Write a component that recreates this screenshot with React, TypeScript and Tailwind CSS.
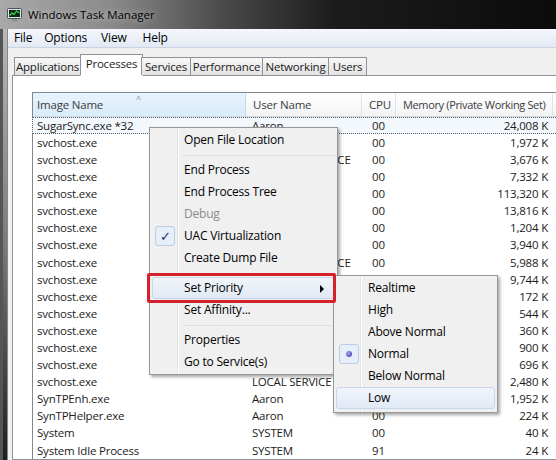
import { ReactNode } from "react";

type Row = { name: string; user: string; cpu: string; mem: string };

// cells hidden behind the context menus are left empty
const rows: Row[] = [
  { name: "SugarSync.exe *32", user: "Aaron", cpu: "00", mem: "24,008 K" },
  { name: "svchost.exe", user: "", cpu: "00", mem: "1,972 K" },
  { name: "svchost.exe", user: "NETWORK SERVICE", cpu: "00", mem: "3,676 K" },
  { name: "svchost.exe", user: "", cpu: "00", mem: "7,332 K" },
  { name: "svchost.exe", user: "", cpu: "00", mem: "113,320 K" },
  { name: "svchost.exe", user: "", cpu: "00", mem: "13,816 K" },
  { name: "svchost.exe", user: "", cpu: "00", mem: "1,204 K" },
  { name: "svchost.exe", user: "", cpu: "00", mem: "3,940 K" },
  { name: "svchost.exe", user: "NETWORK SERVICE", cpu: "00", mem: "5,988 K" },
  { name: "svchost.exe", user: "", cpu: "", mem: "9,744 K" },
  { name: "svchost.exe", user: "", cpu: "", mem: "172 K" },
  { name: "svchost.exe", user: "", cpu: "", mem: "544 K" },
  { name: "svchost.exe", user: "", cpu: "", mem: "360 K" },
  { name: "svchost.exe", user: "", cpu: "", mem: "900 K" },
  { name: "svchost.exe", user: "", cpu: "", mem: "696 K" },
  { name: "svchost.exe", user: "LOCAL SERVICE", cpu: "", mem: "2,480 K" },
  { name: "SynTPEnh.exe", user: "Aaron", cpu: "", mem: "1,952 K" },
  { name: "SynTPHelper.exe", user: "Aaron", cpu: "00", mem: "224 K" },
  { name: "System", user: "SYSTEM", cpu: "00", mem: "40 K" },
  { name: "System Idle Process", user: "SYSTEM", cpu: "91", mem: "24 K" },
];

const tabs = [
  { label: "Applications", w: "w-[67px]" },
  { label: "Processes", w: "w-[63px]", active: true },
  { label: "Services", w: "w-[50px]" },
  { label: "Performance", w: "w-[73px]" },
  { label: "Networking", w: "w-[67px]" },
  { label: "Users", w: "w-[39px]" },
];

const TaskIcon = () => (
  <svg width="15" height="14" viewBox="0 0 15 14">
    <rect x="0.5" y="0.5" width="14" height="10" rx="1" fill="#dfe6ea" stroke="#4a5258" />
    <rect x="2" y="2" width="11" height="7" fill="#0f2a14" />
    <polyline points="2.5,7.5 5,5 7,6.5 9.5,3 12.5,5" fill="none" stroke="#3fe05a" strokeWidth="1.2" />
    <rect x="5" y="11" width="5" height="2.5" fill="#8a9399" />
  </svg>
);

const MenuItem = ({
  children,
  disabled,
  hot,
  mark,
  arrow,
  gutter = "pl-[31px]",
}: {
  children: ReactNode;
  disabled?: boolean;
  hot?: boolean;
  mark?: ReactNode;
  arrow?: boolean;
  gutter?: string;
}) => (
  <div
    className={`relative h-[22px] mx-[2px] flex items-center ${gutter} rounded-[3px] border ${
      hot
        ? "border-[#c7d7ea] bg-[linear-gradient(180deg,#f1f5fb,#e1e9f4)]"
        : "border-transparent"
    } ${disabled ? "text-[#8d8d8d]" : "text-black"}`}
  >
    {mark && (
      <div className="absolute left-[2px] top-0 w-[20px] h-[20px] rounded-[3px] border border-[#b9cde6] bg-[#e6eefa] flex items-center justify-center">
        {mark}
      </div>
    )}
    <span>{children}</span>
    {arrow && (
      <span className="absolute right-[10px] top-[7px] w-0 h-0 border-y-[4px] border-y-transparent border-l-[4px] border-l-black" />
    )}
  </div>
);

const Separator = () => (
  <div className="h-[8px] flex items-center">
    <div className="ml-[32px] mr-[2px] flex-1 border-t border-[#e0e0e0]" />
  </div>
);

export default function App() {
  return (
    <div className="relative w-[556px] h-[460px] overflow-hidden bg-[#f0f0f0] font-['Open_Sans',sans-serif] text-[11.5px] tracking-[-0.2px] leading-none text-[#1b1b1b]">
      {/* title bar */}
      <div className="h-[29px] flex items-center gap-[6px] pl-[7px] bg-[linear-gradient(90deg,#a9a9a9_0%,#8a8a8a_20%,#4a4a4a_40%,#1c1c1c_60%,#0b0b0b_100%)]">
        <TaskIcon />
        <span className="text-[11.5px] tracking-[0px] text-black [text-shadow:0_0_6px_rgba(255,255,255,0.6)]">
          Windows Task Manager
        </span>
      </div>

      <div className="flex h-[431px]">
        {/* left window frame */}
        <div className="w-[8px] bg-[linear-gradient(180deg,#b8b8b8,#7a7a7a_50%,#1e1e1e)] border-l-[3px] border-l-[#555] border-r border-r-[#888]" />

        <div className="flex-1 flex flex-col min-w-0">
          {/* menu bar */}
          <div className="h-[19px] flex items-center pl-[6px] bg-[linear-gradient(180deg,#f4f7fc,#e3e9f4)] border-b border-[#c9d3e2] text-black text-[12px]">
            <span>File</span>
            <span className="ml-[12px]">Options</span>
            <span className="ml-[14px]">View</span>
            <span className="ml-[16px]">Help</span>
          </div>

          {/* tabs */}
          <div className="flex items-end pl-[6px] pt-[6px] relative z-10">
            {tabs.map((t) => (
              <div
                key={t.label}
                className={`${t.w} flex items-center justify-center border border-[#8e9199] ${
                  t.active
                    ? "h-[22px] -mb-px bg-white border-b-white -mx-[1px] pb-[2px]"
                    : "h-[18px] bg-[linear-gradient(180deg,#f7f7f7,#e3e3e3)] border-b-0 -ml-px first:ml-0"
                }`}
              >
                {t.label}
              </div>
            ))}
          </div>

          {/* panel */}
          <div className="flex-1 ml-[4px] -mr-[10px] border border-[#8e9199] bg-white pl-[19px] pt-[16px]">
            <div className="border-l border-t border-[#828790] h-full">
              {/* header */}
              <div className="grid grid-cols-[213px_116px_34px_157px_1fr] h-[24px] border-b border-[#d5d5d5] text-[#3c3c3c]">
                <div className="relative flex items-center pl-[4px] bg-[linear-gradient(180deg,#e8f4fc,#d9ecf9)] border-r border-[#c6d6e4]">
                  Image Name
                  <span className="absolute left-[103px] top-[1px] text-[9px] text-[#7a8a99]">^</span>
                </div>
                <div className="flex items-center pl-[7px] bg-[linear-gradient(180deg,#ffffff,#f3f4f6)] border-r border-[#e2e3e5]">
                  User Name
                </div>
                <div className="flex items-center pl-[7px] bg-[linear-gradient(180deg,#ffffff,#f3f4f6)] border-r border-[#e2e3e5]">
                  CPU
                </div>
                <div className="flex items-center pl-[7px] whitespace-nowrap text-[11px] tracking-[-0.35px] bg-[linear-gradient(180deg,#ffffff,#f3f4f6)] border-r border-[#e2e3e5]">
                  Memory (Private Working Set)
                </div>
                <div className="bg-[linear-gradient(180deg,#ffffff,#f3f4f6)]" />
              </div>

              {/* rows */}
              {rows.map((r, i) => (
                <div
                  key={i}
                  className={`grid grid-cols-[213px_116px_34px_157px_1fr] h-[17.1px] items-center ${
                    i === 0 ? "border border-dotted border-[#4f5e73] bg-[#f3f8fd] -mx-px" : ""
                  }`}
                >
                  <div className="pl-[4px] whitespace-nowrap">{r.name}</div>
                  <div className="pl-[6px] whitespace-nowrap">{r.user}</div>
                  <div className="pl-[10px]">{r.cpu}</div>
                  <div className="text-right pr-[5px]">{r.mem}</div>
                  <div />
                </div>
              ))}
            </div>
          </div>
        </div>
      </div>

      {/* context menu */}
      <div className="absolute left-[149px] top-[127px] w-[189px] h-[248px] bg-[#f0f0f0] border border-[#979797] shadow-[2px_2px_3px_rgba(0,0,0,0.35)] py-[1px] text-black text-[12px]">
        <div className="absolute left-[27px] top-0 bottom-0 border-l border-[#e2e3e3] border-r border-r-white w-[2px]" />
        <MenuItem>Open File Location</MenuItem>
        <Separator />
        <MenuItem>End Process</MenuItem>
        <MenuItem>End Process Tree</MenuItem>
        <MenuItem disabled>Debug</MenuItem>
        <MenuItem mark={<span className="text-[13px] text-[#1e2a78]">✓</span>}>UAC Virtualization</MenuItem>
        <MenuItem>Create Dump File</MenuItem>
        <Separator />
        <MenuItem hot arrow>
          Set Priority
        </MenuItem>
        <MenuItem>Set Affinity...</MenuItem>
        <Separator />
        <MenuItem>Properties</MenuItem>
        <MenuItem>Go to Service(s)</MenuItem>
      </div>

      {/* priority submenu */}
      <div className="absolute left-[333px] top-[275px] w-[165px] h-[138px] bg-[#f0f0f0] border border-[#979797] shadow-[2px_2px_3px_rgba(0,0,0,0.35)] py-[1px] text-black text-[12px]">
        <div className="absolute left-[26px] top-0 bottom-0 border-l border-[#e2e3e3] border-r border-r-white w-[2px]" />
        <MenuItem gutter="pl-[31px]">Realtime</MenuItem>
        <MenuItem gutter="pl-[31px]">High</MenuItem>
        <MenuItem gutter="pl-[31px]">Above Normal</MenuItem>
        <MenuItem
          gutter="pl-[31px]"
          mark={<span className="w-[6px] h-[6px] rounded-full bg-[radial-gradient(circle_at_35%_35%,#a9a3ff,#3b2f8f)]" />}
        >
          Normal
        </MenuItem>
        <MenuItem gutter="pl-[31px]">Below Normal</MenuItem>
        <MenuItem gutter="pl-[31px]" hot>
          Low
        </MenuItem>
      </div>

      {/* red highlight box */}
      <div className="absolute left-[147px] top-[273px] w-[189px] h-[30px] border-[3px] border-[#d3222c] rounded-[2px]" />
    </div>
  );
}
